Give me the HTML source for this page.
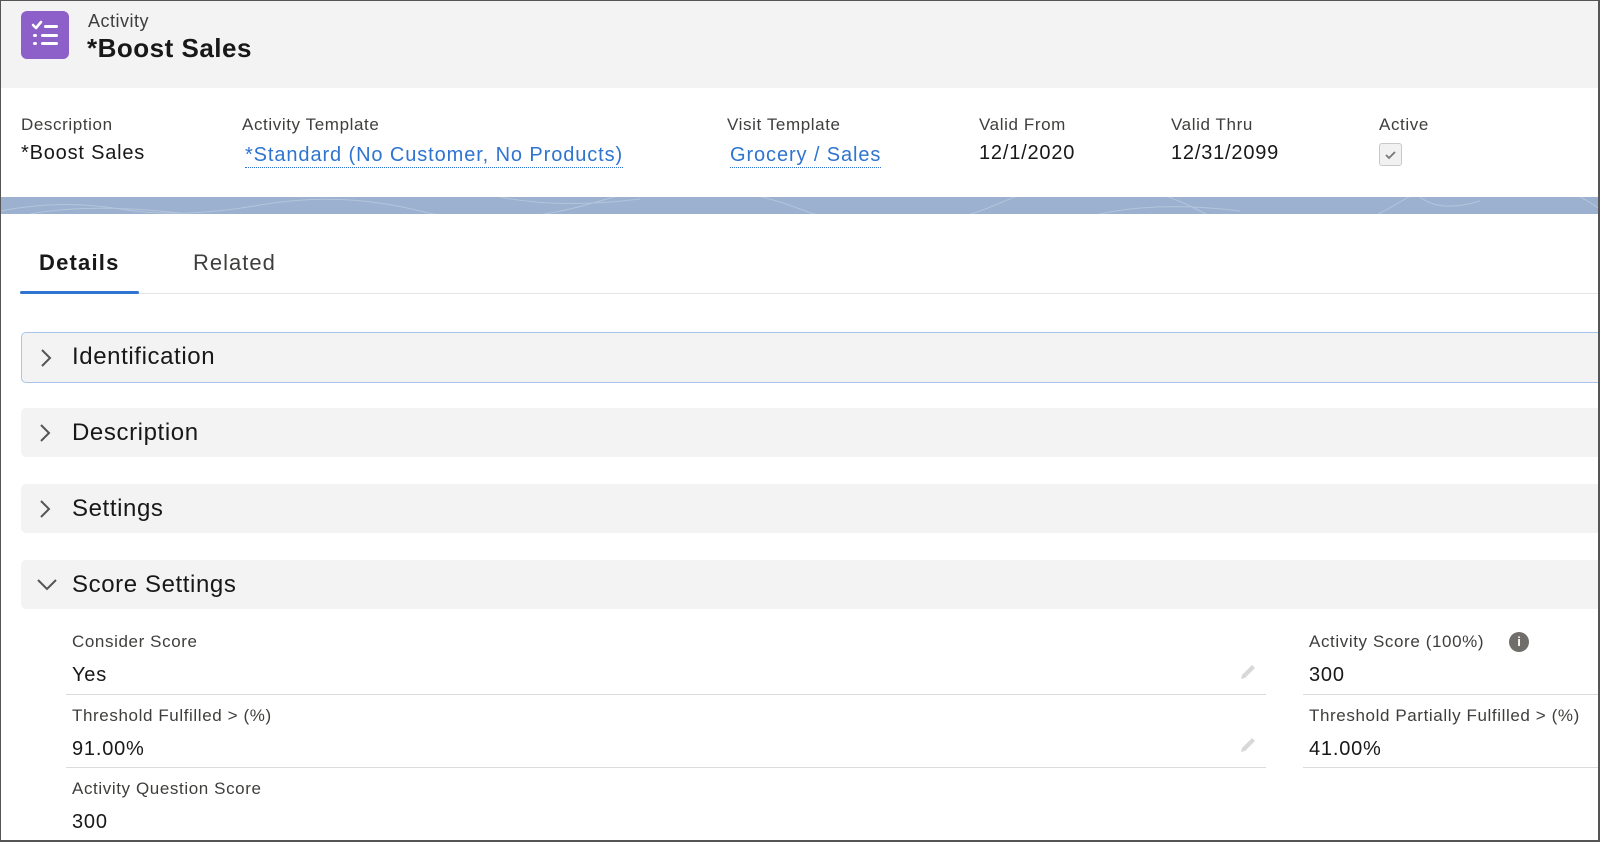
<!DOCTYPE html>
<html><head><meta charset="utf-8"><style>
*{margin:0;padding:0;box-sizing:border-box}
body{width:1600px;height:842px;overflow:hidden;background:#fff;font-family:"Liberation Sans",sans-serif;color:#181818;position:relative}
.frame{position:absolute;left:0;top:0;width:1600px;height:842px;border:1.5px solid #555;border-right-width:2px;border-bottom-width:2px;pointer-events:none;z-index:10}
.hdr{position:absolute;left:0;top:0;width:1600px;height:88px;background:#f3f3f3}
.icon{position:absolute;left:21px;top:11px;width:48px;height:48px;border-radius:6px;background:#8c5fc9}
.abs{position:absolute;white-space:nowrap}
.lbl{font-size:17px;color:#3e3e3c;letter-spacing:0.6px}
.val{font-size:20px;color:#181818;letter-spacing:0.8px}
.lnk{font-size:20px;color:#2e74d0;border-bottom:1px dotted #2e74d0;line-height:24px;letter-spacing:0.9px}
.band{position:absolute;left:0;top:197px;width:1600px;height:17px;background:#9bb1cf}
.sec{position:absolute;left:21px;width:1579px;height:49px;background:#f3f3f3;border-radius:5px 0 0 5px}
.sec span{position:absolute;left:51px;top:11px;font-size:24px;color:#181818;letter-spacing:0.6px}
.sec svg{position:absolute;left:17px;top:15px}
.line{position:absolute;height:1px;background:#dddbda}
</style></head><body>
<div class="hdr"></div>
<div class="icon"><svg width="48" height="48" viewBox="0 0 48 48"><path d="M12 14l3 3 5-6" stroke="#fff" stroke-width="2.6" fill="none" stroke-linecap="round" stroke-linejoin="round"/><rect x="23" y="14" width="14" height="3" rx="1.5" fill="#fff"/><rect x="12" y="23" width="4" height="3" rx="1.5" fill="#fff"/><rect x="20" y="23" width="17" height="3" rx="1.5" fill="#fff"/><rect x="12" y="31" width="4" height="3" rx="1.5" fill="#fff"/><rect x="20" y="31" width="17" height="3" rx="1.5" fill="#fff"/></svg></div>
<div class="abs" style="left:88px;top:11px;font-size:18px;color:#3e3e3c;letter-spacing:0.5px">Activity</div>
<div class="abs" style="left:87px;top:33px;font-size:26px;font-weight:bold;letter-spacing:0.5px">*Boost Sales</div>

<div class="abs lbl" style="left:21px;top:115px">Description</div>
<div class="abs val" style="left:21px;top:142px">*Boost Sales</div>
<div class="abs lbl" style="left:242px;top:115px">Activity Template</div>
<div class="abs lnk" style="left:245px;top:143px">*Standard (No Customer, No Products)</div>
<div class="abs lbl" style="left:727px;top:115px">Visit Template</div>
<div class="abs lnk" style="left:730px;top:143px">Grocery / Sales</div>
<div class="abs lbl" style="left:979px;top:115px">Valid From</div>
<div class="abs val" style="left:979px;top:142px">12/1/2020</div>
<div class="abs lbl" style="left:1171px;top:115px">Valid Thru</div>
<div class="abs val" style="left:1171px;top:142px">12/31/2099</div>
<div class="abs lbl" style="left:1379px;top:115px">Active</div>
<div class="abs" style="left:1379px;top:143px;width:23px;height:23px;border:1px solid #c9c9c9;border-radius:3px;background:#f1f1f1"><svg width="21" height="21" viewBox="0 0 21 21"><path d="M6 11l3 3 6-6" stroke="#777" stroke-width="1.8" fill="none"/></svg></div>

<div class="band"><svg width="1600" height="17"><g stroke="#b4c5dc" fill="none" stroke-width="1"><path d="M0 14 Q60 2 120 12 T260 8 T420 14 T600 4 T800 12 T1000 6 T1200 14 T1400 5 T1600 12"/><path d="M30 17 Q90 6 180 16 M500 0 Q560 12 640 2 M1100 17 Q1160 4 1240 14 M1420 0 q20 16 60 4"/></g></svg></div>

<div class="abs" style="left:39px;top:250px;font-size:22px;font-weight:bold;letter-spacing:1.2px">Details</div>
<div class="abs" style="left:193px;top:250px;font-size:22px;color:#3e3e3c;letter-spacing:1px">Related</div>
<div class="line" style="left:20px;top:293px;width:1580px;background:#e5e5e5"></div>
<div class="abs" style="left:20px;top:291px;width:119px;height:3px;background:#2e74d0;border-radius:2px"></div>

<div class="sec" style="top:332px;height:51px;border:1.5px solid #a9c4ea;border-right:none"><svg width="14" height="20" viewBox="0 0 14 20"><path d="M3 2l8 8-8 8" stroke="#555" stroke-width="2" fill="none"/></svg><span style="top:10px;left:50px">Identification</span></div>
<div class="sec" style="top:408px"><svg width="14" height="20" viewBox="0 0 14 20"><path d="M3 2l8 8-8 8" stroke="#555" stroke-width="2" fill="none"/></svg><span>Description</span></div>
<div class="sec" style="top:484px"><svg width="14" height="20" viewBox="0 0 14 20"><path d="M3 2l8 8-8 8" stroke="#555" stroke-width="2" fill="none"/></svg><span>Settings</span></div>
<div class="sec" style="top:560px"><svg width="22" height="20" viewBox="0 0 22 20" style="left:15px;top:15px"><path d="M2 5l9 9 9-9" stroke="#555" stroke-width="2" fill="none"/></svg><span>Score Settings</span></div>

<div class="abs lbl" style="left:72px;top:632px">Consider Score</div>
<div class="abs val" style="left:72px;top:664px">Yes</div>
<div class="line" style="left:66px;top:694px;width:1200px"></div>
<div class="abs lbl" style="left:72px;top:706px">Threshold Fulfilled &gt; (%)</div>
<div class="abs val" style="left:72px;top:738px">91.00%</div>
<div class="line" style="left:66px;top:767px;width:1200px"></div>
<div class="abs lbl" style="left:72px;top:779px">Activity Question Score</div>
<div class="abs val" style="left:72px;top:811px">300</div>

<svg class="abs" style="left:1237px;top:661px" width="22" height="22" viewBox="0 0 22 22"><path d="M4 18l1-4 10-10 3 3-10 10z" fill="#d8d8d8"/></svg>
<svg class="abs" style="left:1237px;top:734px" width="22" height="22" viewBox="0 0 22 22"><path d="M4 18l1-4 10-10 3 3-10 10z" fill="#d8d8d8"/></svg>

<div class="abs lbl" style="left:1309px;top:632px">Activity Score (100%)</div>
<div class="abs" style="left:1509px;top:632px;width:20px;height:20px;border-radius:50%;background:#706e6b;color:#fff;font-size:13px;font-weight:bold;text-align:center;line-height:20px">i</div>
<div class="abs val" style="left:1309px;top:664px">300</div>
<div class="line" style="left:1303px;top:694px;width:297px"></div>
<div class="abs lbl" style="left:1309px;top:706px">Threshold Partially Fulfilled &gt; (%)</div>
<div class="abs val" style="left:1309px;top:738px">41.00%</div>
<div class="line" style="left:1303px;top:767px;width:297px"></div>
<div class="frame"></div>
</body></html>
